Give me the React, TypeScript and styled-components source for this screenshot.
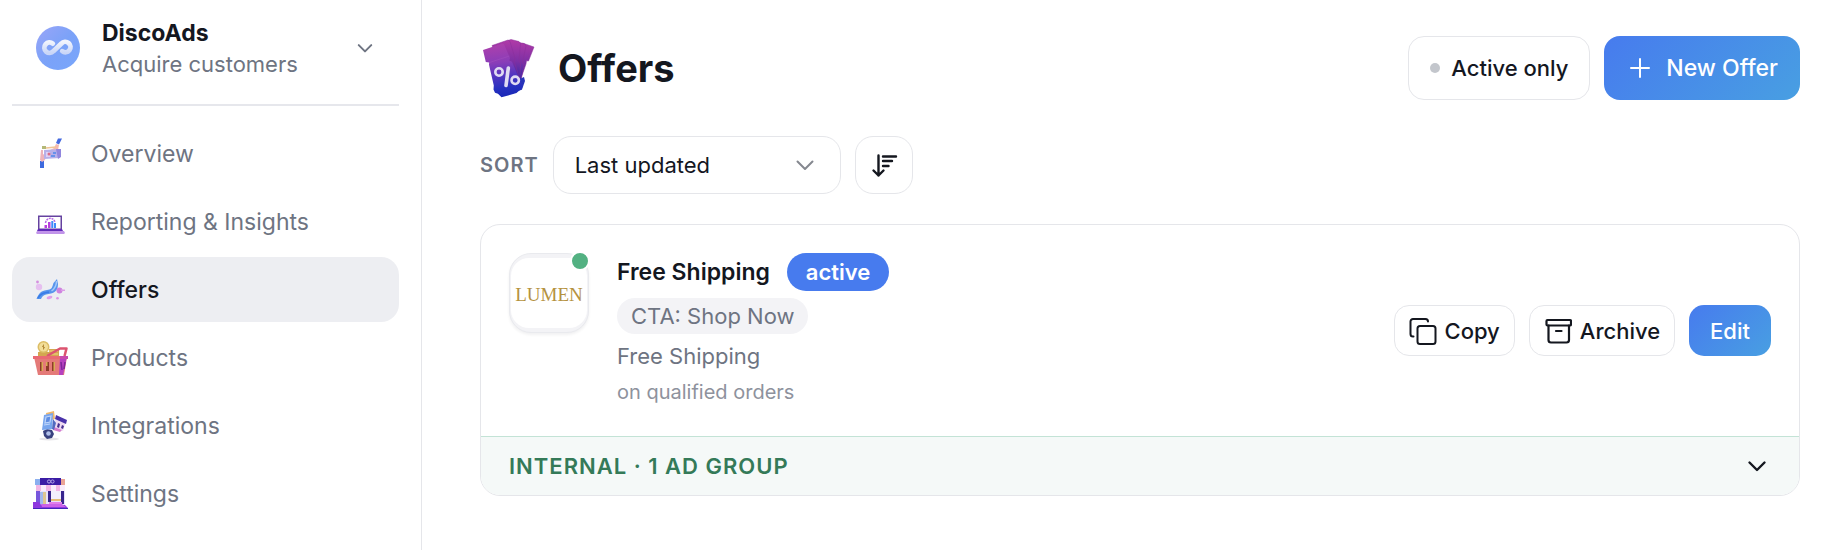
import React from "react";
import styled, { createGlobalStyle, css } from "styled-components";

const GlobalStyle = createGlobalStyle`
  *, *::before, *::after { box-sizing: border-box; }
  body { margin: 0; background: #fff; }
  body, button, select { font-family: Inter, "Liberation Sans", sans-serif; color: #14171f; }
  h1, h2, p, ul { margin: 0; padding: 0; }
`;

const Page = styled.div`
  display: flex;
  min-height: 100vh;
`;

const Sidebar = styled.aside`
  flex: 0 0 422px;
  padding: 0 22px 20px 12px;
  border-right: 1px solid #e5e6ea;
`;

const Account = styled.button`
  display: flex;
  align-items: center;
  width: 100%;
  padding: 16px 24px 24px;
  border: 0;
  border-bottom: 2px solid #e6e7ec;
  background: none;
  text-align: left;
  cursor: pointer;
`;

const AccountText = styled.span`
  display: flex;
  flex-direction: column;
  flex: 1;
  padding: 2px 0 0 22px;
  font-size: 22px;
  line-height: 31px;
  color: #6e7482;
`;

const AccountName = styled.strong`
  font-size: 23px;
  font-weight: 700;
  color: #14171f;
`;

const NavList = styled.ul`
  display: flex;
  flex-direction: column;
  gap: 3px;
  padding-top: 15px;
  list-style: none;
`;

const NavLink = styled.a<{ $active?: boolean }>`
  display: flex;
  align-items: center;
  gap: 22px;
  height: 65px;
  padding: 0 20px;
  border-radius: 18px;
  font-size: 23px;
  text-decoration: none;
  color: #6e7482;
  ${(p) => p.$active && css`
    background: #edeef2;
    color: #14171f;
    font-weight: 500;
  `}
`;

const Main = styled.main`
  flex: 1;
  min-width: 0;
  padding: 36px 44px 40px 58px;
`;

const Header = styled.header`
  display: flex;
  align-items: center;
  gap: 14px;
`;

const Title = styled.h1`
  flex: 1;
  padding-left: 4px;
  font-size: 38px;
  line-height: 46px;
  font-weight: 700;
`;

const gradient = css`
  background: linear-gradient(135deg, #477bee, #489fe2);
  border: 0;
  color: #fff;
`;

const Button = styled.button<{ $primary?: boolean }>`
  display: flex;
  align-items: center;
  justify-content: center;
  gap: 8px;
  height: 51px;
  padding: 0 14px;
  border: 1px solid #e5e6ea;
  border-radius: 15px;
  background: #fff;
  font-size: 22px;
  font-weight: 500;
  white-space: nowrap;
  cursor: pointer;
  ${(p) => p.$primary && gradient}
`;

const HeaderButton = styled(Button)`
  gap: ${(p) => (p.$primary ? 12 : 11)}px;
  height: 64px;
  padding: 0 ${(p) => (p.$primary ? 22 : 21)}px;
  border-radius: 16px;
  font-size: ${(p) => (p.$primary ? 23 : 22)}px;
`;

const EditButton = styled(Button)`
  padding: 0 21px;
`;

const Dot = styled.span`
  width: 10px;
  height: 10px;
  border-radius: 50%;
  background: #c3c6cc;
`;

const SortBar = styled.div`
  display: flex;
  align-items: center;
  gap: 14px;
  padding: 36px 0 30px;
`;

const SortLabel = styled.label`
  font-size: 20px;
  font-weight: 600;
  letter-spacing: 1px;
  color: #6e7482;
`;

const SelectWrap = styled.div`
  position: relative;
  width: 288px;

  svg {
    position: absolute;
    right: 24px;
    top: 17px;
    pointer-events: none;
  }
`;

const Select = styled.select`
  appearance: none;
  width: 100%;
  height: 58px;
  padding: 0 56px 0 21px;
  border: 1px solid #e5e6ea;
  border-radius: 18px;
  background: #fff;
  font-size: 22px;
`;

const SortButton = styled.button`
  display: grid;
  place-items: center;
  width: 58px;
  height: 58px;
  padding: 0;
  border: 1px solid #e5e6ea;
  border-radius: 18px;
  background: #fff;
  cursor: pointer;
`;

const Card = styled.article`
  border: 1px solid #e5e6ea;
  border-radius: 20px;
  overflow: hidden;
`;

const CardBody = styled.div`
  display: flex;
  align-items: flex-start;
  gap: 28px;
  padding: 28px;
`;

const Thumb = styled.div`
  position: relative;
  display: grid;
  place-items: center;
  width: 80px;
  height: 80px;
  border: 1px solid #e9eaee;
  border-radius: 22px;
  background: #f3f3f6;
  box-shadow: 0 2px 3px rgba(20, 23, 31, 0.06);
`;

const ThumbLogo = styled.span`
  display: grid;
  place-items: center;
  width: 76px;
  height: 70px;
  padding-top: 4px;
  border-radius: 18px;
  background: #fff;
  font-family: "Liberation Serif", serif;
  font-size: 19px;
  color: #b5923f;
`;

const StatusDot = styled.span`
  position: absolute;
  top: -3px;
  right: -2px;
  width: 20px;
  height: 20px;
  border: 2px solid #fff;
  border-radius: 50%;
  background: #53b182;
`;

const Details = styled.div`
  display: flex;
  flex-direction: column;
  align-items: flex-start;
  flex: 1;
`;

const NameRow = styled.div`
  display: flex;
  align-items: center;
  gap: 17px;
  margin-bottom: 7px;
`;

const OfferName = styled.h2`
  font-size: 23px;
  line-height: 36px;
  font-weight: 600;
`;

const Badge = styled.span`
  padding: 0 19px;
  border-radius: 19px;
  background: #477bee;
  color: #fff;
  font-size: 22px;
  line-height: 38px;
  font-weight: 600;
`;

const Tag = styled.span`
  padding: 0 14px;
  border-radius: 18px;
  background: #f3f3f6;
  color: #6e7482;
  font-size: 22px;
  line-height: 36px;
`;

const Headline = styled.p`
  padding-top: 4px;
  font-size: 22px;
  line-height: 36px;
  color: #6e7482;
`;

const Subline = styled.p`
  padding-top: 2px;
  font-size: 20px;
  line-height: 32px;
  color: #8e929d;
`;

const Actions = styled.div`
  display: flex;
  align-self: center;
  gap: 14px;
`;

const GroupToggle = styled.button`
  display: flex;
  align-items: center;
  justify-content: space-between;
  width: 100%;
  height: 59px;
  padding: 0 30px 0 28px;
  border: 0;
  border-top: 1px solid #c3e3d6;
  background: #f5f9f8;
  color: #347a58;
  font-size: 22px;
  font-weight: 600;
  letter-spacing: 1px;
  cursor: pointer;
`;

const Chevron = ({ color, size = 24, width = 2 }: { color: string; size?: number; width?: number }) => (
  <svg width={size} height={size} viewBox="0 0 24 24" fill="none" stroke={color} strokeWidth={width} strokeLinecap="round" strokeLinejoin="round" aria-hidden="true">
    <path d="M4.500 8.500 12 16l7.500-7.500" />
  </svg>
);

const DiscoLogo = () => (
  <svg width="44" height="44" viewBox="0 0 44 44" aria-hidden="true">
    <defs>
      <linearGradient id="disco" x1="0" y1="0" x2="1" y2="1">
        <stop offset="0" stopColor="#9aa5f8" />
        <stop offset=".5" stopColor="#7ba2f8" />
        <stop offset="1" stopColor="#78a6fb" />
      </linearGradient>
      <linearGradient id="loop" x1="0" y1="0" x2="0" y2="1">
        <stop offset="0" stopColor="#f1f4fd" />
        <stop offset="1" stopColor="#c9d6f7" />
      </linearGradient>
    </defs>
    <circle cx="22" cy="22" r="22" fill="url(#disco)" />
    <path d="M16.800 17.600A5.200 5.200 0 1 0 17.400 25.200L25.400 17.600A5.200 5.200 0 1 1 26.200 25.200" fill="none" stroke="url(#loop)" strokeWidth="4.800" strokeLinecap="round" />
  </svg>
);

const OverviewIcon = () => (
  <svg width="37" height="37" viewBox="0 0 37 37" aria-hidden="true">
    <path d="M8 26h4v7H8z" fill="#3d6ade" />
    <path d="m24 8 2-4.500h4l-3 6z" fill="#4368df" />
    <path d="m24 9 3 1-1 5-5 3-3-3 4-2z" fill="#f3b8b0" />
    <path d="M9 15h2v4l3 2-1 4-3 2-2-2z" fill="#eeb3bb" />
    <path d="m12 15 16-1v9l-16 1z" fill="#b7b0e9" />
    <path d="M24 14h5v8l-3 2z" fill="#9186de" />
    <path d="M14 17h4v5h-4z" fill="#ded0f5" />
    <circle cx="17" cy="19" r="1.500" fill="#db6b87" />
    <path d="M21 17h3v2h-3zm-2 3h4v2h-4z" fill="#6691eb" />
    <path d="M10 11h4v3h-4z" fill="#b4b877" />
    <path d="m14 13 10-1" stroke="#f0c494" strokeWidth="1.500" />
  </svg>
);

const ReportingIcon = () => (
  <svg width="37" height="37" viewBox="0 0 37 37" aria-hidden="true">
    <path d="M6 12.500h24v14.500H6z" fill="#65429f" />
    <path d="M7.500 14h21v11.500h-21z" fill="#fff" />
    <path d="M6 26h24l1 2H5z" fill="#612ab9" />
    <path d="M5 28h27l1 2-1 1H5l-1-1z" fill="#c194e9" />
    <path d="M12.500 25v-3h2.500v3zm3.500 0v-6h2.500v6z" fill="#b63fdd" />
    <path d="M19.300 25v-7h2v7zm2.700 0v-5h2v5z" fill="#3e8bfa" />
    <path d="M13.500 20c1-6 8-6 9.500-1" fill="none" stroke="#b568e6" strokeWidth="1.500" strokeDasharray="2 .8" />
  </svg>
);

const OffersIcon = () => (
  <svg width="37" height="37" viewBox="0 0 37 37" aria-hidden="true">
    <path d="M4.500 28c2-5 4-7.500 8-8.500l5-1c3-1 3-4 4-6.500l3.500-4 1 5c0 5-2 8.500-7 9.500l-5 1c-3 .7-4 2.500-5 4.500z" fill="#5795ed" />
    <path d="M6 27c3-5 6-5 11-6" fill="none" stroke="#387ce7" strokeWidth="1.500" />
    <path d="M24.500 10c0 5-2 8-5 10" fill="none" stroke="#a3c8f8" strokeWidth="1.500" />
    <circle cx="7" cy="16" r="3.200" fill="#e6bff0" />
    <circle cx="5.500" cy="11" r="1.400" fill="#d58fdf" />
    <circle cx="27.500" cy="19.500" r="3" fill="#ce83df" />
    <path d="M29 18.500h4V20h-4z" fill="#dc9ce8" />
    <ellipse cx="17.500" cy="26.500" rx="3" ry="1.500" fill="#e09fea" transform="rotate(-15 17.500 26.500)" />
    <circle cx="25.500" cy="27.300" r="1.300" fill="#dc97e6" />
  </svg>
);

const ProductsIcon = () => (
  <svg width="37" height="37" viewBox="0 0 37 37" aria-hidden="true">
    <path d="M6 13h12v5H6zm11-3h10v8H17z" fill="#d3a850" />
    <circle cx="11.500" cy="8" r="6" fill="#dcbd65" />
    <circle cx="11.500" cy="8" r="4.500" fill="#f2dd97" />
    <path d="M11.500 5.500v5M10 7l3 2" stroke="#b58b38" strokeWidth="1" />
    <path d="M17 12h9m-9 3h9" stroke="#f0d683" />
    <path d="m15 17 13-7.500h6.500l-2 7.500" fill="none" stroke="#dc536f" strokeWidth="2.500" strokeLinejoin="round" />
    <path d="M2 18h33l-3 18H6z" fill="#e47a78" />
    <path d="m28 18 7-1-4 19h-4z" fill="#b641bf" />
    <path d="M1 17h35v3H1z" fill="#e96a73" />
    <path d="M28 17h8v3h-8z" fill="#c74aad" />
    <path d="M8 23h3v9H8zm6 0h3v9h-3zm6 0h3v9h-3z" fill="#8d3c29" />
    <path d="M9.500 23H11v9H9.500zm6 0H14v4h1.500zm6 0H23v9h-1.500z" fill="#d7ad55" />
    <path d="m29 23 1 8m3-8-1 7" stroke="#7e2699" strokeWidth="1.500" />
  </svg>
);

const IntegrationsIcon = () => (
  <svg width="37" height="37" viewBox="0 0 37 37" aria-hidden="true">
    <ellipse cx="17" cy="32" rx="10" ry="1.500" fill="#e6e5e8" />
    <path d="m14 6 8-2 1 8-8 2z" fill="#efb66b" />
    <path d="m24 10 10 4-3 10-9-4z" fill="#eedaf1" />
    <path d="m24 8 11 5-1 4-11-5z" fill="#4a32aa" />
    <path d="m26 16 2 1-1 4-2-1zm4 2 2 1-1 3-2-1z" fill="#472f90" />
    <path d="m22 20 8 3-2 2-7-2z" fill="#d37dce" />
    <path d="m11 24 4-2 5 1 2 4-2 4-5 1-3-3z" fill="#39427f" />
    <circle cx="16.500" cy="26.500" r="2.300" fill="#b0bfe9" />
    <path d="m12 8 9-2-1 16-10 1z" fill="#78a5ed" />
    <path d="m14 10 5-1-1 6-5 1zm-2 8 6-1" fill="#5e8ce1" stroke="#bed5fa" strokeWidth="1.200" />
    <path d="m21 12 3 4-2 7-2-1z" fill="#5269bf" />
  </svg>
);

const SettingsIcon = () => (
  <svg width="37" height="37" viewBox="0 0 37 37" aria-hidden="true">
    <path d="M4 8h29v22H4z" fill="#e6e2fb" />
    <path d="M3 4h6v6H3z" fill="#8bafef" />
    <path d="M29 4h4v6h-4z" fill="#eaa496" />
    <path d="M8 3h21v7H8z" fill="#3b1da5" />
    <circle cx="17" cy="6.500" r="1.600" fill="none" stroke="#b4a6e7" />
    <circle cx="20.500" cy="6.500" r="1.600" fill="none" stroke="#b4a6e7" />
    <path d="M4 10h29v6H4z" fill="#f2b6e5" />
    <path d="M9 10h5v6H9zm10 0h5v6h-5zm9 0h5v6h-5z" fill="#f9edfb" />
    <path d="M4 16h4v14H4z" fill="#7756dc" />
    <path d="M8 17h6v14H8z" fill="#a2b9ed" />
    <path d="M11 17h3v14h-3z" fill="#dec690" />
    <path d="M16 16h3v11h-3zm13 0h3v13h-3z" fill="#38258d" />
    <path d="M19 16h10v8H19z" fill="#f3effd" />
    <path d="M19 24h10v2H19z" fill="#e3bd75" />
    <path d="M17 27h13v3H17z" fill="#e17eea" />
    <path d="M1 27h6l2 3h24l3 3H1z" fill="#8e38df" />
    <path d="M9 29h21l4 3H10z" fill="#cb62e8" />
    <path d="M1 33h35v1H1z" fill="#4325bb" />
  </svg>
);

const TicketsIcon = () => (
  <svg width="60" height="64" viewBox="0 0 60 64" aria-hidden="true">
    <defs>
      <linearGradient id="ticket" gradientUnits="userSpaceOnUse" x1="18" y1="8" x2="24" y2="60">
        <stop offset="0" stopColor="#ad40ac" />
        <stop offset=".35" stopColor="#8a3db8" />
        <stop offset=".6" stopColor="#5436c0" />
        <stop offset=".85" stopColor="#2530bf" />
        <stop offset="1" stopColor="#1b29b8" />
      </linearGradient>
      <linearGradient id="ticketBack" gradientUnits="userSpaceOnUse" x1="38" y1="4" x2="36" y2="58">
        <stop offset="0" stopColor="#b13aa7" />
        <stop offset=".4" stopColor="#7c30a5" />
        <stop offset=".7" stopColor="#3a2aa6" />
        <stop offset="1" stopColor="#2430b4" />
      </linearGradient>
    </defs>
    <g fill="url(#ticketBack)" stroke="#8a2f9a" strokeWidth=".5">
      <path d="m40 8 3-.8L54 11l-5.500 14-2-.2-.5 3.200-7 20-12-5z" />
      <path d="m33 7 3-1.500 9 2.500 1 2-3.500 16 1.500 3-4.500 22-12-3z" />
      <path d="m28 4.500 3-1 8 2 1.500 2-1.500 17 1.500 3-1 24-12 4z" />
      <path d="M12 9.500 28 4l2 1.500 5 17-1 2.500 6 19-12 6z" />
    </g>
    <path d="M33 46l11-5 1 4-3 8.500-9 4z" fill="#2734b9" />
    <path d="M3 14 22.500 7.500l1.500.8 6 13.700-.7 2.500 2.700 1.200 10.500 24.800-.8 3-2 .6-3.200 3-15 4.200-3.500-3.600-3-1-1.500-3.200.3-4L9 28.800l.2-2.300-3.400-.4z" fill="url(#ticket)" />
    <path d="m9.500 26.500 20-6.500" stroke="#a452c0" strokeWidth=".5" />
    <g fill="none" stroke="#dfdbf2" strokeWidth="2.600" strokeLinecap="round">
      <circle cx="19" cy="36" r="3.700" />
      <circle cx="35.200" cy="44.300" r="3.700" />
      <path d="m28.300 32-2.300 17.500" strokeWidth="3.600" />
    </g>
  </svg>
);

const PlusIcon = () => (
  <svg width="28" height="28" viewBox="0 0 28 28" fill="none" stroke="#fff" strokeWidth="2" strokeLinecap="round" aria-hidden="true">
    <path d="M14 5v18M5 14h18" />
  </svg>
);

const SortIcon = () => (
  <svg width="28" height="28" viewBox="0 0 28 28" fill="none" stroke="#14171f" strokeWidth="2.400" strokeLinecap="round" strokeLinejoin="round" aria-hidden="true">
    <path d="M8.500 4.500v20M3.500 19.500l5 5 5-5M13 5.500h13M13 10h9M13 15h5.500" />
  </svg>
);

const CopyIcon = () => (
  <svg width="28" height="28" viewBox="0 0 28 28" fill="none" stroke="#14171f" strokeWidth="2" strokeLinecap="round" strokeLinejoin="round" aria-hidden="true">
    <rect x="8.500" y="9" width="18" height="18" rx="2.500" />
    <path d="M4.500 19.500H4a2.500 2.500 0 0 1-2.500-2.500V4.500A2.500 2.500 0 0 1 4 2h12.500A2.500 2.500 0 0 1 19 4.500" />
  </svg>
);

const ArchiveIcon = () => (
  <svg width="28" height="28" viewBox="0 0 28 28" fill="none" stroke="#14171f" strokeWidth="2.200" strokeLinecap="round" strokeLinejoin="round" aria-hidden="true">
    <rect x="2.500" y="3" width="24.500" height="5.500" rx="1" />
    <path d="M4.500 8.500V23A2.500 2.500 0 0 0 7 25.500h15.500A2.500 2.500 0 0 0 25 23V8.500M12 14h5.500" />
  </svg>
);

const navItems = [
  { label: "Overview", Icon: OverviewIcon },
  { label: "Reporting & Insights", Icon: ReportingIcon },
  { label: "Offers", Icon: OffersIcon, active: true },
  { label: "Products", Icon: ProductsIcon },
  { label: "Integrations", Icon: IntegrationsIcon },
  { label: "Settings", Icon: SettingsIcon },
];

export default function App() {
  return (
    <Page>
      <GlobalStyle />
      <Sidebar>
        <Account type="button">
          <DiscoLogo />
          <AccountText>
            <AccountName>DiscoAds</AccountName>
            <span>Acquire customers</span>
          </AccountText>
          <Chevron color="#6e7482" size={20} width={2.4} />
        </Account>
        <nav>
          <NavList>
            {navItems.map(({ label, Icon, active }) => (
              <li key={label}>
                <NavLink href="#" $active={active} aria-current={active ? "page" : undefined}>
                  <Icon />
                  {label}
                </NavLink>
              </li>
            ))}
          </NavList>
        </nav>
      </Sidebar>
      <Main>
        <Header>
          <TicketsIcon />
          <Title>Offers</Title>
          <HeaderButton type="button">
            <Dot />
            Active only
          </HeaderButton>
          <HeaderButton type="button" $primary>
            <PlusIcon />
            New Offer
          </HeaderButton>
        </Header>
        <SortBar>
          <SortLabel htmlFor="sort">SORT</SortLabel>
          <SelectWrap>
            <Select id="sort" defaultValue="updated">
              <option value="updated">Last updated</option>
            </Select>
            <Chevron color="#85888f" />
          </SelectWrap>
          <SortButton type="button" aria-label="Sort descending">
            <SortIcon />
          </SortButton>
        </SortBar>
        <Card>
          <CardBody>
            <Thumb>
              <ThumbLogo>LUMEN</ThumbLogo>
              <StatusDot />
            </Thumb>
            <Details>
              <NameRow>
                <OfferName>Free Shipping</OfferName>
                <Badge>active</Badge>
              </NameRow>
              <Tag>CTA: Shop Now</Tag>
              <Headline>Free Shipping</Headline>
              <Subline>on qualified orders</Subline>
            </Details>
            <Actions>
              <Button type="button"><CopyIcon />Copy</Button>
              <Button type="button"><ArchiveIcon />Archive</Button>
              <EditButton type="button" $primary>Edit</EditButton>
            </Actions>
          </CardBody>
          <GroupToggle type="button" aria-expanded="false">
            INTERNAL · 1 AD GROUP
            <Chevron color="#14171f" width={2.4} />
          </GroupToggle>
        </Card>
      </Main>
    </Page>
  );
}
